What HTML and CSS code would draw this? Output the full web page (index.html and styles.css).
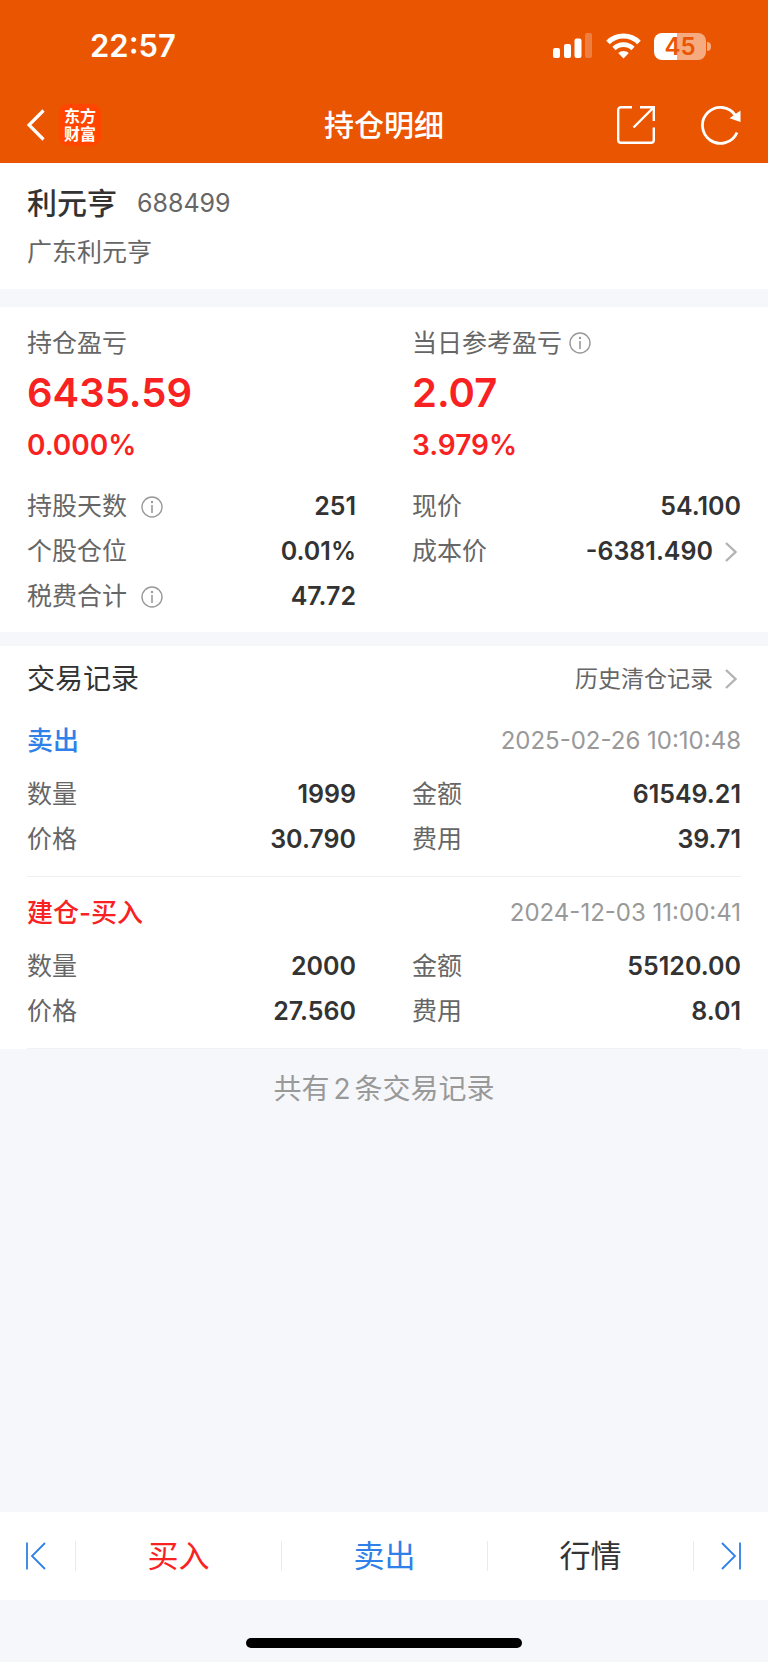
FILE: index.html
```html
<!DOCTYPE html>
<html lang="zh-CN">
<head>
<meta charset="utf-8">
<meta name="viewport" content="width=device-width, initial-scale=1">
<title>持仓明细</title>
<link rel="stylesheet" href="styles.css">
</head>
<body>
<svg class="sprite" aria-hidden="true">
  <symbol id="info" viewBox="0 0 22 22">
    <circle cx="11" cy="11" r="10" fill="none" stroke="currentColor" stroke-width="1.4"/>
    <path d="M11 9v8" stroke="currentColor" stroke-width="1.6"/>
    <circle cx="11" cy="6" r="1.2" fill="currentColor"/>
  </symbol>
  <symbol id="more" viewBox="0 0 12 20">
    <path d="M1 1l9.500 9L1 19" fill="none" stroke="currentColor" stroke-width="2.400"/>
  </symbol>
</svg>

<header class="top">
  <div class="status">
    <time class="clock">22:57</time>
    <svg class="signal" width="39" height="26" viewBox="0 0 39 26" fill="#fff">
      <rect x="0" y="15" width="7" height="10" rx="2"/>
      <rect x="11" y="11" width="7" height="14" rx="2"/>
      <rect x="21.500" y="5.500" width="7" height="19.500" rx="2"/>
      <rect x="32" y="0" width="7" height="25" rx="2" opacity=".25"/>
    </svg>
    <svg class="wifi" width="35" height="26" viewBox="0 0 35 26" fill="none" stroke="#fff">
      <path d="M2 9.500a22 22 0 0 1 31 0" stroke-width="5"/>
      <path d="M8 15.500a13.500 13.500 0 0 1 19 0" stroke-width="4.600"/>
      <path d="M17.500 25.500l-5.300-5.400a7.600 7.600 0 0 1 10.600 0z" fill="#fff" stroke="none"/>
    </svg>
    <div class="battery">45</div>
  </div>
  <nav class="nav">
    <div class="nav-left">
      <button type="button" class="icon-btn" aria-label="返回">
        <svg width="18" height="32" viewBox="0 0 18 32"><path d="M16.500 1.500L2 16l14.500 14.500" fill="none" stroke="#fff" stroke-width="3.200"/></svg>
      </button>
      <div class="logo">东方<br>财富</div>
    </div>
    <h1 class="title">持仓明细</h1>
    <div class="nav-right">
      <button type="button" class="icon-btn" aria-label="分享">
        <svg width="38" height="38" viewBox="0 0 38 38" fill="none" stroke="#fff" stroke-width="2.400">
          <path d="M15 1.200H4a2.800 2.800 0 0 0-2.800 2.800v30A2.800 2.800 0 0 0 4 36.800h30a2.800 2.800 0 0 0 2.800-2.800V21.500"/>
          <path d="M23 1.200h13.800V15M36.500 1.500L16.500 21.500"/>
        </svg>
      </button>
      <button type="button" class="icon-btn" aria-label="刷新">
        <svg width="40" height="40" viewBox="0 0 40 40">
          <path d="M36 27.500A18 18 0 1 1 34.500 10.500" fill="none" stroke="#fff" stroke-width="2.800"/>
          <path d="M39.500 5.500v11.500l-11-3.800z" fill="#fff"/>
        </svg>
      </button>
    </div>
  </nav>
</header>

<main class="content">
  <section class="stock">
    <h2 class="stock-name">利元亨 <span class="code">688499</span></h2>
    <p class="company">广东利元亨</p>
  </section>

  <section class="position">
    <div class="cols">
      <div class="profit">
        <span class="label">持仓盈亏</span>
        <strong class="amount">6435.59</strong>
        <span class="percent">0.000%</span>
      </div>
      <div class="profit">
        <span class="label">当日参考盈亏<svg class="info near"><use href="#info"/></svg></span>
        <strong class="amount">2.07</strong>
        <span class="percent">3.979%</span>
      </div>
    </div>
    <div class="cols facts">
      <dl>
        <div class="row"><dt>持股天数<svg class="info"><use href="#info"/></svg></dt><dd>251</dd></div>
        <div class="row"><dt>个股仓位</dt><dd>0.01%</dd></div>
        <div class="row"><dt>税费合计<svg class="info"><use href="#info"/></svg></dt><dd>47.72</dd></div>
      </dl>
      <dl>
        <div class="row"><dt>现价</dt><dd>54.100</dd></div>
        <div class="row"><dt>成本价</dt><dd>-6381.490<svg class="more"><use href="#more"/></svg></dd></div>
      </dl>
    </div>
  </section>

  <section class="trades">
    <div class="trades-head">
      <h2>交易记录</h2>
      <a class="history" href="#">历史清仓记录<svg class="more"><use href="#more"/></svg></a>
    </div>
    <article class="record">
      <div class="record-head"><h3 class="sell">卖出</h3><time>2025-02-26 10:10:48</time></div>
      <div class="cols">
        <dl>
          <div class="row"><dt>数量</dt><dd>1999</dd></div>
          <div class="row"><dt>价格</dt><dd>30.790</dd></div>
        </dl>
        <dl>
          <div class="row"><dt>金额</dt><dd>61549.21</dd></div>
          <div class="row"><dt>费用</dt><dd>39.71</dd></div>
        </dl>
      </div>
    </article>
    <article class="record">
      <div class="record-head"><h3 class="buy">建仓-买入</h3><time>2024-12-03 11:00:41</time></div>
      <div class="cols">
        <dl>
          <div class="row"><dt>数量</dt><dd>2000</dd></div>
          <div class="row"><dt>价格</dt><dd>27.560</dd></div>
        </dl>
        <dl>
          <div class="row"><dt>金额</dt><dd>55120.00</dd></div>
          <div class="row"><dt>费用</dt><dd>8.01</dd></div>
        </dl>
      </div>
    </article>
  </section>
  <p class="total">共有<span class="count">2</span>条交易记录</p>
</main>

<footer>
  <div class="actions">
    <button type="button" class="step" aria-label="上一个">
      <svg width="20" height="28" viewBox="0 0 20 28"><path d="M1 .5v27M19 1L6 14l13 13" fill="none" stroke="currentColor" stroke-width="1.800"/></svg>
    </button>
    <button type="button" class="buy">买入</button>
    <button type="button" class="sell">卖出</button>
    <button type="button">行情</button>
    <button type="button" class="step" aria-label="下一个">
      <svg width="20" height="28" viewBox="0 0 20 28"><path d="M19 .5v27M1 1l13 13L1 27" fill="none" stroke="currentColor" stroke-width="1.800"/></svg>
    </button>
  </div>
  <div class="home"></div>
</footer>
</body>
</html>
```
FILE: styles.css
```css
* {
  box-sizing: border-box;
}
body {
  display: flex;
  flex-direction: column;
  min-height: 100vh;
  margin: 0;
  background: #f6f7fa;
  color: #333;
  font: 25px/32px Inter, "Noto Sans CJK SC", sans-serif;
}
h1, h2, h3, p, dl, dd {
  margin: 0;
}
button {
  padding: 0;
  border: 0;
  background: none;
  color: inherit;
  font: inherit;
}
svg {
  display: block;
  flex: none;
}
.sprite {
  position: absolute;
  width: 0;
  height: 0;
}

/* header */
.top {
  padding-bottom: 5px;
  background: #ea5502;
  color: #fff;
}
.status {
  display: flex;
  align-items: center;
  height: 92px;
  padding: 0 57px 0 90px;
}
.clock {
  margin-right: auto;
  font-size: 31px;
  font-weight: 600;
}
.wifi {
  margin: 0 13px 0 14px;
}
.battery {
  position: relative;
  width: 52px;
  height: 27px;
  margin-right: 5px;
  border-radius: 8px;
  background: linear-gradient(to right, #fff 45%, #f5aa80 45%);
  color: #ea5502;
  font-size: 24px;
  font-weight: 600;
  line-height: 27px;
  text-align: center;
}
.battery::after {
  content: "";
  position: absolute;
  top: 9px;
  right: -5px;
  width: 4px;
  height: 9px;
  border-radius: 0 4px 4px 0;
  background: #f5aa80;
}
.nav {
  display: grid;
  grid-template-columns: 1fr auto 1fr;
  align-items: center;
  height: 66px;
  padding: 0 27px;
}
.nav-left, .nav-right {
  display: flex;
  align-items: center;
  gap: 14px;
}
.nav-right {
  justify-content: flex-end;
  gap: 46px;
}
.logo {
  width: 42px;
  height: 42px;
  padding-top: 3px;
  border-radius: 9px;
  background: #ff4500;
  font-size: 16px;
  font-weight: 700;
  line-height: 18px;
  text-align: center;
}
.title {
  font-size: 30px;
  font-weight: 500;
}

/* sections */
.content {
  flex: 1;
}
section {
  padding: 0 27px;
  background: #fff;
}
.stock {
  padding-top: 20px;
  padding-bottom: 20px;
}
.stock-name {
  display: flex;
  align-items: center;
  gap: 20px;
  font-size: 30px;
  font-weight: 500;
  line-height: 40px;
}
.code {
  color: #666;
  font-size: 25px;
  font-weight: 400;
}
.company {
  margin-top: 12px;
  color: #666;
  line-height: 34px;
}
.position {
  margin: 18px 0 14px;
  padding-top: 20px;
  padding-bottom: 13px;
}
.cols {
  display: grid;
  grid-template-columns: 1fr 1fr;
  gap: 56px;
}
.profit {
  display: flex;
  flex-direction: column;
  gap: 10px;
  color: #f82222;
  font-weight: 600;
}
.label {
  display: flex;
  align-items: center;
  color: #666;
  font-weight: 400;
}
.amount {
  font-size: 40px;
  font-weight: 600;
  line-height: 48px;
}
.percent {
  font-size: 28px;
  line-height: 36px;
}
.facts {
  margin-top: 21px;
}
.row {
  display: flex;
  justify-content: space-between;
  line-height: 45px;
}
dt, dd {
  display: flex;
  align-items: center;
}
dt {
  color: #666;
}
dd {
  font-weight: 600;
}
.info {
  width: 22px;
  height: 22px;
  margin-left: 14px;
  color: #999;
}
.info.near {
  margin-left: 7px;
}
.more {
  width: 12px;
  height: 20px;
  margin: 0 4px 0 12px;
  color: #b3b3b3;
}

/* trade records */
.trades-head {
  display: flex;
  align-items: center;
  justify-content: space-between;
  height: 59px;
  padding-top: 7px;
}
.trades-head h2 {
  font-size: 28px;
  font-weight: 400;
}
.history {
  display: flex;
  align-items: center;
  color: #666;
  font-size: 23px;
  text-decoration: none;
}
.record {
  padding: 7px 0 14px;
  border-bottom: 1px solid #f0f0f2;
}
.record-head {
  display: flex;
  align-items: center;
  justify-content: space-between;
  height: 58px;
  margin-bottom: 2px;
}
.record-head h3 {
  font-size: 26px;
  font-weight: 500;
}
.record-head time {
  color: #999;
  font-size: 24px;
}
.buy {
  color: #f82222;
}
.sell {
  color: #2f80e8;
}
.total {
  padding: 20px 0;
  color: #999;
  font-size: 28px;
  line-height: 40px;
  text-align: center;
}
.count {
  margin: 0 4px;
}

/* bottom bar */
.actions {
  display: flex;
  align-items: center;
  height: 88px;
  background: #fff;
}
.actions button {
  display: flex;
  flex: 1;
  align-items: center;
  justify-content: center;
  height: 30px;
  font-size: 31px;
}
.actions button + button {
  border-left: 1px solid #ebebed;
}
.actions .step {
  flex: 0 0 75px;
  color: #2f80e8;
}
.actions .step:first-child {
  padding-right: 4px;
}
.home {
  width: 36%;
  height: 10px;
  margin: 38px auto 14px;
  border-radius: 5px;
  background: #000;
}
```
